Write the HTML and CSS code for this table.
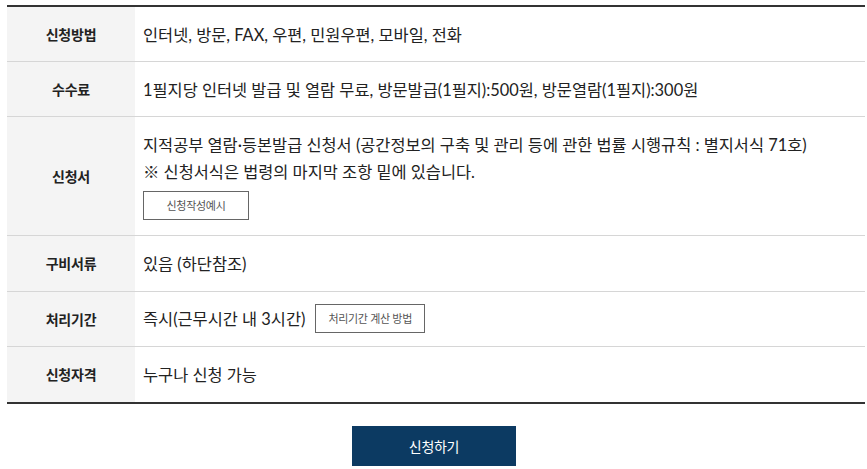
FILE: index.html
```html
<!DOCTYPE html>
<html lang="ko">
<head>
<meta charset="utf-8">
<link rel="stylesheet" href="styles.css">
</head>
<body>
<div class="page">
  <div class="info">
    <div class="row">
      <div class="th">신청방법</div>
      <div class="td">인터넷, 방문, FAX, 우편, 민원우편, 모바일, 전화</div>
    </div>
    <div class="row">
      <div class="th">수수료</div>
      <div class="td">1필지당 인터넷 발급 및 열람 무료, 방문발급(1필지):500원, 방문열람(1필지):300원</div>
    </div>
    <div class="row">
      <div class="th">신청서</div>
      <div class="td multi">
        <p>지적공부 열람·등본발급 신청서 (공간정보의 구축 및 관리 등에 관한 법률 시행규칙 : 별지서식 71호)</p>
        <p>※ 신청서식은 법령의 마지막 조항 밑에 있습니다.</p>
        <span class="sbtn wide">신청작성예시</span>
      </div>
    </div>
    <div class="row">
      <div class="th">구비서류</div>
      <div class="td">있음 (하단참조)</div>
    </div>
    <div class="row">
      <div class="th">처리기간</div>
      <div class="td inline">즉시(근무시간 내 3시간)<span class="sbtn">처리기간 계산 방법</span></div>
    </div>
    <div class="row">
      <div class="th">신청자격</div>
      <div class="td">누구나 신청 가능</div>
    </div>
  </div>
  <div class="actions">
    <span class="apply">신청하기</span>
  </div>
</div>
</body>
</html>
```

FILE: styles.css
```css
html, body {
  margin: 0;
  padding: 0;
  background: #fff;
}
body {
  font-family: Lato, "Noto Sans CJK KR", sans-serif;
  color: #222;
}
.page {
  padding: 5px 2px 0 7px;
}
.info {
  border-top: 2px solid #333;
  border-bottom: 2px solid #333;
}
.row {
  display: flex;
  min-height: 54px;
}
.row + .row {
  border-top: 1px solid #d6d6d6;
}
.row:nth-child(n+4) {
  min-height: 54.6px;
}
.th {
  flex: 0 0 128px;
  display: flex;
  align-items: center;
  justify-content: center;
  background: #f4f4f4;
  font-size: 14px;
  font-weight: 700;
  letter-spacing: -0.2px;
  color: #222;
}
.td {
  flex: 1;
  display: flex;
  align-items: center;
  padding: 0 8px;
  font-size: 16.4px;
  line-height: 27px;
}
.td.multi {
  display: block;
  padding-top: 14px;
  padding-bottom: 15px;
}
.td p {
  margin: 0;
}
.sbtn {
  display: inline-flex;
  align-items: center;
  justify-content: center;
  box-sizing: border-box;
  height: 29px;
  padding: 0 12px;
  border: 1px solid #666;
  font-size: 11px;
  line-height: 1;
  color: #555;
  letter-spacing: -0.3px;
  background: #fff;
}
.sbtn.wide {
  width: 106px;
  margin-top: 6px;
  vertical-align: top;
}
.inline {
  gap: 10px;
}
.actions {
  display: flex;
  justify-content: center;
  padding-top: 22px;
  padding-right: 4px;
}
.apply {
  display: flex;
  align-items: center;
  justify-content: center;
  width: 164px;
  height: 40px;
  background: #0c3a62;
  color: #fff;
  font-size: 14px;
  letter-spacing: -0.3px;
}
```
